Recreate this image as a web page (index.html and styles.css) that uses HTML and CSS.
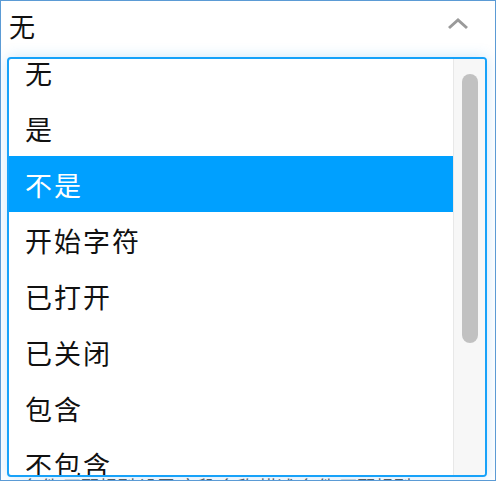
FILE: index.html
```html
<!DOCTYPE html>
<html>
<head>
    <title>条件选择</title>
    <link rel="stylesheet" href="styles.css">
</head>
<body>
    <div class="frame">
        <div class="select">
            <span class="select-value">无</span>
            <svg class="chevron" width="24" height="14" viewBox="0 0 24 14">
                <path d="M3 12 L12 4 L21 12" fill="none" stroke="#9a9a9a" stroke-width="3"/>
            </svg>
        </div>

        <div class="page-content">
            <p>条件 匹配规则 设置 字段 名称 描述 条件 匹配规则</p>
        </div>

        <div class="dropdown">
            <div class="options">
                <div class="options-inner">
                    <div class="option">无</div>
                    <div class="option">是</div>
                    <div class="option selected">不是</div>
                    <div class="option">开始字符</div>
                    <div class="option">已打开</div>
                    <div class="option">已关闭</div>
                    <div class="option">包含</div>
                    <div class="option">不包含</div>
                </div>
            </div>
            <div class="scrollbar">
                <div class="thumb"></div>
            </div>
        </div>
    </div>
</body>
</html>
```

FILE: styles.css
```css
body {
    margin: 0;
    padding: 0;
    background: #fff;
    font-family: "Noto Sans CJK SC", "Noto Sans", sans-serif;
    color: #111;
}
.frame {
    position: relative;
    width: 496px;
    height: 481px;
    box-sizing: border-box;
    border: 1px solid #5b9bd5;
    overflow: hidden;
}
.select {
    height: 48px;
    display: flex;
    align-items: center;
    justify-content: space-between;
    padding: 0 25px 0 8px;
    font-size: 26px;
}
.chevron {
    display: block;
    margin-top: -4px;
}
.page-content {
    padding: 0 22px;
}
.page-content p {
    margin: 424px 0 0;
    font-size: 18px;
    color: #555;
    white-space: nowrap;
}
.dropdown {
    position: absolute;
    left: 6px;
    top: 56px;
    right: 8px;
    bottom: 3px;
    display: flex;
    background: #fff;
    border: 2px solid #17a2f9;
    border-radius: 4px;
    box-shadow: 0 0 14px rgba(60, 160, 240, 0.25);
    overflow: hidden;
}
.options {
    flex: 1;
    overflow: hidden;
}
.options-inner {
    margin-top: -15px;
}
.option {
    height: 56px;
    display: flex;
    align-items: center;
    padding-left: 16px;
    font-size: 27px;
    letter-spacing: 2px;
}
.option.selected {
    background: #00a0ff;
    color: #fff;
}
.scrollbar {
    width: 31px;
    background: #f7f7f7;
    border-left: 1px solid #e8e8e8;
    padding-top: 15px;
}
.thumb {
    width: 16px;
    height: 269px;
    margin-left: 8px;
    background: #c1c1c1;
    border-radius: 8px;
}
```
